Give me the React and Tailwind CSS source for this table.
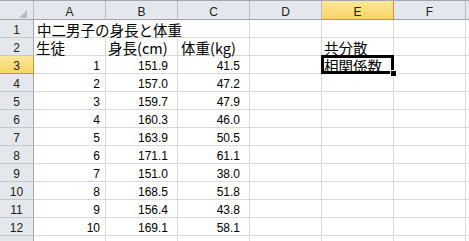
import React from "react";

const JP = { fontFamily: '"Noto Sans CJK JP", "Noto Sans", sans-serif' };
const NUM = { fontFamily: '"Liberation Sans", Arial, sans-serif' };

const data = [
  [1, "151.9", "41.5"],
  [2, "157.0", "47.2"],
  [3, "159.7", "47.9"],
  [4, "160.3", "46.0"],
  [5, "163.9", "50.5"],
  [6, "171.1", "61.1"],
  [7, "151.0", "38.0"],
  [8, "168.5", "51.8"],
  [9, "156.4", "43.8"],
  [10, "169.1", "58.1"],
];

function RowHead({ n, sel }) {
  return (
    <div
      className={
        "w-[34px] shrink-0 h-full border-r border-b flex items-end justify-center text-[12px] leading-[12px] pb-[1px] text-[#222] " +
        (sel
          ? "bg-linear-to-b from-[#fde79a] to-[#f9d462] border-[#c7953f]"
          : "bg-[#e4e7eb] border-r-[#9ea4ad] border-b-[#c6cad0]")
      }
      style={NUM}
    >
      {n}
    </div>
  );
}

function Cell({ children, kind, align = "left", hideRight, className = "", extra }) {
  const font = kind === "jp" ? JP : NUM;
  const txt =
    kind === "jp"
      ? "text-[14.5px] leading-[15px]"
      : "text-[12px] leading-[12px] pb-[1px]";
  return (
    <div
      className={
        "relative w-[72px] shrink-0 h-full border-b border-[#d9d9d9] flex items-end whitespace-nowrap text-black " +
        (hideRight ? "border-r border-r-transparent " : "border-r ") +
        (align === "right" ? "justify-end " : "justify-start pl-[2px] ") +
        txt +
        " " +
        className
      }
      style={font}
    >
      {children}
      {extra}
    </div>
  );
}

function Row({ n, sel, children }) {
  return (
    <div className="flex h-[18px]">
      <RowHead n={n} sel={sel} />
      {children}
      <div className="flex-1 h-full border-b border-[#d9d9d9]" />
    </div>
  );
}

export default function App() {
  const cols = ["A", "B", "C", "D", "E", "F"];
  return (
    <div className="w-[469px] h-[241px] overflow-hidden bg-white relative">
      {/* column header */}
      <div className="flex h-[20px] border-t border-[#a3a9b2]">
        <div className="w-[34px] shrink-0 h-full border-r border-b border-r-[#b8bdc4] border-b-[#9ea4ad] bg-[#e4e7eb] relative">
          <svg className="absolute left-[19px] top-[9px]" width="9" height="9" viewBox="0 0 9 9">
            <polygon points="8,0 8,8 0,8" fill="#b6bcc4" />
          </svg>
        </div>
        {cols.map((c) => (
          <div
            key={c}
            className={
              "w-[72px] shrink-0 h-full border-r border-b flex items-end justify-center text-[12px] leading-[12px] pb-[1px] text-[#222] " +
              (c === "E"
                ? "bg-linear-to-b from-[#fde79a] to-[#f9d462] border-[#c7953f]"
                : "bg-[#e4e7eb] border-r-[#b8bdc4] border-b-[#9ea4ad]")
            }
            style={NUM}
          >
            {c}
          </div>
        ))}
        <div className="flex-1 h-full border-b border-[#9ea4ad] bg-[#e4e7eb]" />
      </div>

      <Row n={1}>
        <Cell kind="jp" hideRight className="pl-[3px] overflow-visible z-[1]">
          中二男子の身長と体重
        </Cell>
        <Cell kind="jp" hideRight />
        <Cell kind="jp" />
        <Cell kind="jp" />
        <Cell kind="jp" />
        <Cell kind="jp" />
      </Row>

      <Row n={2}>
        <Cell kind="jp">生徒</Cell>
        <Cell kind="jp">身長(cm)</Cell>
        <Cell kind="jp" className="pl-[3px]">体重(kg)</Cell>
        <Cell kind="jp" />
        <Cell kind="jp">共分散</Cell>
        <Cell kind="jp" />
      </Row>

      {data.map(([a, b, c], i) => (
        <Row key={i} n={i + 3} sel={i === 0}>
          <Cell kind="num" align="right" className="pr-[5px]">{a}</Cell>
          <Cell kind="num" align="right" className="pr-[9px]">{b}</Cell>
          <Cell kind="num" align="right" className="pr-[9px]">{c}</Cell>
          <Cell kind="num" />
          {i === 0 ? (
            <Cell
              kind="jp"
              extra={
                <>
                  <div className="absolute left-[-1px] top-[-1px] w-[73px] h-[19px] border-[3px] border-black z-10 pointer-events-none" />
                  <div className="absolute left-[68px] top-[14px] w-[7px] h-[7px] bg-black border border-white z-20" />
                </>
              }
            >
              相関係数
            </Cell>
          ) : (
            <Cell kind="num" />
          )}
          <Cell kind="num" />
        </Row>
      ))}

      <Row n="">
        <Cell kind="num" />
        <Cell kind="num" />
        <Cell kind="num" />
        <Cell kind="num" />
        <Cell kind="num" />
        <Cell kind="num" />
      </Row>
    </div>
  );
}
